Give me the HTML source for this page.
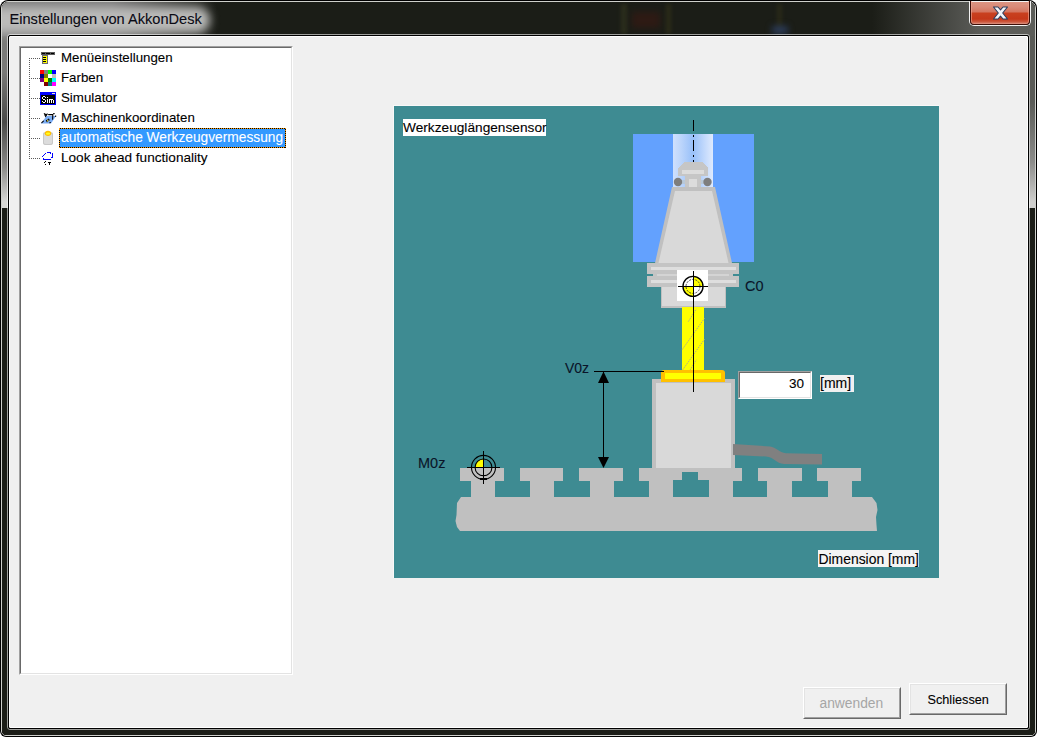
<!DOCTYPE html>
<html><head><meta charset="utf-8"><style>
html,body{margin:0;padding:0;width:1037px;height:737px;overflow:hidden;background:#fff;}
*{box-sizing:border-box;}
body{font-family:"Liberation Sans",sans-serif;position:relative;}
.a{position:absolute;}
.t{position:absolute;white-space:nowrap;line-height:16px;color:#000;-webkit-text-stroke:0.1px currentColor;}
</style></head><body>
<!-- window frame -->
<div class="a" style="left:0;top:0;width:1037px;height:737px;background:#000;border-radius:8px 8px 6px 6px;"></div>
<div class="a" style="left:1px;top:1px;width:1035px;height:735px;border:1px solid #cfd0cc;border-radius:7px 7px 5px 5px;background:#000;"></div>
<!-- dark frame fill -->
<div class="a" style="left:2px;top:2px;width:1033px;height:733px;border-radius:6px 6px 4px 4px;background:#1b1d17;overflow:hidden;">
  <!-- left side gradient -->
  <div class="a" style="left:0;top:0;width:8px;height:206px;background:linear-gradient(#7e7e7c 0px,#7a7a78 70px,#4a4a48 120px,#8a8a88 165px,#d8d8d6 200px,#d8d8d6 206px);"></div>
  <!-- right side gradient -->
  <div class="a" style="left:1025px;top:0;width:8px;height:206px;background:linear-gradient(#5a5b57 0px,#5a5b57 100px,#8c8c8a 160px,#cfcfcd 200px,#cfcfcd 206px);"></div>
  <!-- title bar right gray -->
  <div class="a" style="left:870px;top:0;width:163px;height:34px;background:linear-gradient(90deg,rgba(90,91,87,0) 0px,rgba(90,91,87,0.85) 90px,rgba(92,93,89,1) 110px);"></div>
  <!-- title glow -->
  <div class="a" style="left:0;top:0;width:240px;height:34px;background:linear-gradient(90deg,#828282 0px,#7c7c7c 110px,rgba(27,29,23,0) 215px);"></div>
  <div class="a" style="left:-22px;top:5px;width:230px;height:26px;background:#bbbbb9;filter:blur(5px);border-radius:14px;"></div>
  <!-- specks -->
  <div class="a" style="left:619px;top:2px;width:6px;height:30px;background:#2c2e1c;filter:blur(2px);"></div>
  <div class="a" style="left:630px;top:10px;width:28px;height:16px;background:#2e1a14;filter:blur(3px);"></div>
  <div class="a" style="left:664px;top:2px;width:5px;height:30px;background:#2c2c18;filter:blur(2px);"></div>
  <div class="a" style="left:775px;top:2px;width:5px;height:30px;background:#2a2a18;filter:blur(2px);"></div>
  <div class="a" style="left:770px;top:24px;width:16px;height:8px;background:#2a3a58;filter:blur(3px);"></div>
</div>
<!-- inner borders -->
<div class="a" style="left:7px;top:34px;width:1023px;height:696px;border:1px solid rgba(255,255,255,0.58);border-radius:3px;"></div>
<div class="a" style="left:8px;top:35px;width:1021px;height:694px;border:1px solid #000;border-radius:2px;background:#000;"></div>
<div class="a" style="left:9px;top:36px;width:1019px;height:692px;border:1px solid #fff;background:#f0f0f0;border-radius:1px;"></div>

<!-- title -->
<div class="t" id="title" style="left:9.5px;top:9.5px;font-size:14.6px;line-height:18px;color:#0a0a14;">Einstellungen von AkkonDesk</div>

<!-- close button -->
<div class="a" style="left:969px;top:1px;width:62px;height:25px;border:1px solid #f2f2f2;border-top:none;border-radius:0 0 5px 5px;">
  <div style="width:100%;height:100%;border:1px solid #3c0e08;border-top:none;border-radius:0 0 4px 4px;background:linear-gradient(#f4f4f4 0px,#f4f4f4 1px,#dc9482 1px,#d98a78 6px,#d4745e 11px,#c9401f 12px,#c5381a 18px,#cc5a40 21px,#dd9686 23px);box-shadow:inset 1px 0 0 rgba(240,170,150,0.6),inset -1px 0 0 rgba(240,170,150,0.6);"></div>
</div>
<svg class="a" style="left:985px;top:0px;" width="30" height="28" viewBox="985 0 30 28">
  <path d="M993.5 7 L998 7 L1000.5 9.8 L1003 7 L1007.5 7 L1002.7 13 L1007.5 19 L1003 19 L1000.5 16.2 L998 19 L993.5 19 L998.3 13 Z" fill="#f2f4f8" stroke="#2c3c5c" stroke-width="1.1" stroke-linejoin="round"/>
</svg>

<!-- tree box -->
<div class="a" style="left:19px;top:46px;width:274px;height:629px;border-top:1px solid #a0a0a0;border-left:1px solid #a0a0a0;border-right:1px solid #fff;border-bottom:1px solid #fff;">
  <div style="width:100%;height:100%;border-top:1px solid #696969;border-left:1px solid #696969;border-right:1px solid #e3e3e3;border-bottom:1px solid #e3e3e3;background:#fff;"></div>
</div>


<!-- tree content -->
<svg class="a" style="left:0;top:0;" width="300" height="180" shape-rendering="crispEdges">
  <g fill="#5a5a5a">
    <!-- vertical dotted -->
    <rect x="29" y="58" width="1" height="1"/><rect x="29" y="60" width="1" height="1"/><rect x="29" y="62" width="1" height="1"/><rect x="29" y="64" width="1" height="1"/><rect x="29" y="66" width="1" height="1"/><rect x="29" y="68" width="1" height="1"/><rect x="29" y="70" width="1" height="1"/><rect x="29" y="72" width="1" height="1"/><rect x="29" y="74" width="1" height="1"/><rect x="29" y="76" width="1" height="1"/><rect x="29" y="78" width="1" height="1"/><rect x="29" y="80" width="1" height="1"/><rect x="29" y="82" width="1" height="1"/><rect x="29" y="84" width="1" height="1"/><rect x="29" y="86" width="1" height="1"/><rect x="29" y="88" width="1" height="1"/><rect x="29" y="90" width="1" height="1"/><rect x="29" y="92" width="1" height="1"/><rect x="29" y="94" width="1" height="1"/><rect x="29" y="96" width="1" height="1"/><rect x="29" y="98" width="1" height="1"/><rect x="29" y="100" width="1" height="1"/><rect x="29" y="102" width="1" height="1"/><rect x="29" y="104" width="1" height="1"/><rect x="29" y="106" width="1" height="1"/><rect x="29" y="108" width="1" height="1"/><rect x="29" y="110" width="1" height="1"/><rect x="29" y="112" width="1" height="1"/><rect x="29" y="114" width="1" height="1"/><rect x="29" y="116" width="1" height="1"/><rect x="29" y="118" width="1" height="1"/><rect x="29" y="120" width="1" height="1"/><rect x="29" y="122" width="1" height="1"/><rect x="29" y="124" width="1" height="1"/><rect x="29" y="126" width="1" height="1"/><rect x="29" y="128" width="1" height="1"/><rect x="29" y="130" width="1" height="1"/><rect x="29" y="132" width="1" height="1"/><rect x="29" y="134" width="1" height="1"/><rect x="29" y="136" width="1" height="1"/><rect x="29" y="138" width="1" height="1"/><rect x="29" y="140" width="1" height="1"/><rect x="29" y="142" width="1" height="1"/><rect x="29" y="144" width="1" height="1"/><rect x="29" y="146" width="1" height="1"/><rect x="29" y="148" width="1" height="1"/><rect x="29" y="150" width="1" height="1"/><rect x="29" y="152" width="1" height="1"/><rect x="29" y="154" width="1" height="1"/><rect x="29" y="156" width="1" height="1"/><rect x="29" y="158" width="1" height="1"/>
    <rect x="31" y="58" width="1" height="1"/><rect x="33" y="58" width="1" height="1"/><rect x="35" y="58" width="1" height="1"/><rect x="37" y="58" width="1" height="1"/><rect x="39" y="58" width="1" height="1"/><rect x="31" y="78" width="1" height="1"/><rect x="33" y="78" width="1" height="1"/><rect x="35" y="78" width="1" height="1"/><rect x="37" y="78" width="1" height="1"/><rect x="39" y="78" width="1" height="1"/><rect x="31" y="98" width="1" height="1"/><rect x="33" y="98" width="1" height="1"/><rect x="35" y="98" width="1" height="1"/><rect x="37" y="98" width="1" height="1"/><rect x="39" y="98" width="1" height="1"/><rect x="31" y="118" width="1" height="1"/><rect x="33" y="118" width="1" height="1"/><rect x="35" y="118" width="1" height="1"/><rect x="37" y="118" width="1" height="1"/><rect x="39" y="118" width="1" height="1"/><rect x="31" y="138" width="1" height="1"/><rect x="33" y="138" width="1" height="1"/><rect x="35" y="138" width="1" height="1"/><rect x="37" y="138" width="1" height="1"/><rect x="39" y="138" width="1" height="1"/><rect x="31" y="158" width="1" height="1"/><rect x="33" y="158" width="1" height="1"/><rect x="35" y="158" width="1" height="1"/><rect x="37" y="158" width="1" height="1"/><rect x="39" y="158" width="1" height="1"/>
  </g>
  <!-- menu icon -->
  <rect x="41" y="52" width="14" height="3" fill="#5a5a5a"/>
  <rect x="42" y="53" width="3" height="1" fill="#000"/>
  <rect x="46" y="53" width="4" height="1" fill="#000"/>
  <rect x="51" y="53" width="3" height="1" fill="#000"/>
  <rect x="42" y="55" width="6" height="9" fill="#6a6a78"/>
  <rect x="43" y="56" width="4" height="7" fill="#ffff00"/>
  <rect x="43" y="57" width="3" height="1" fill="#000"/>
  <rect x="43" y="59" width="3" height="1" fill="#000"/>
  <rect x="43" y="61" width="3" height="1" fill="#000"/>
  <!-- farben icon -->
  <rect x="40" y="70" width="4" height="4" fill="#ff0000"/><rect x="44" y="70" width="4" height="4" fill="#808080"/><rect x="48" y="70" width="4" height="4" fill="#00ff00"/><rect x="52" y="70" width="4" height="4" fill="#0000ff"/>
  <rect x="40" y="74" width="4" height="4" fill="#000080"/><rect x="44" y="74" width="4" height="4" fill="#808000"/><rect x="48" y="74" width="4" height="4" fill="#ffffff"/><rect x="52" y="74" width="4" height="4" fill="#c0c0c0"/>
  <rect x="40" y="78" width="4" height="4" fill="#800080"/><rect x="44" y="78" width="4" height="4" fill="#ffff00"/><rect x="48" y="78" width="4" height="4" fill="#008000"/><rect x="52" y="78" width="4" height="4" fill="#00ffff"/>
  <rect x="44" y="82" width="4" height="4" fill="#800000"/><rect x="48" y="82" width="4" height="4" fill="#008080"/><rect x="52" y="82" width="4" height="4" fill="#ff00ff"/>
  <!-- sim icon -->
  <rect x="40" y="92" width="16" height="13" fill="#0000ff"/>
  <rect x="41" y="95" width="14" height="9" fill="#000"/>
  <rect x="52" y="93" width="3" height="1" fill="#e8e8d0"/>
  <g fill="#fff">
    <rect x="43" y="96" width="2" height="1"/><rect x="42" y="97" width="1" height="2"/><rect x="45" y="97" width="1" height="1"/>
    <rect x="43" y="99" width="2" height="1"/><rect x="45" y="100" width="1" height="2"/><rect x="42" y="101" width="1" height="1"/>
    <rect x="43" y="102" width="2" height="1"/>
    <rect x="47" y="97" width="1" height="1"/><rect x="47" y="99" width="1" height="4"/>
    <rect x="49" y="99" width="4" height="1"/><rect x="49" y="100" width="1" height="3"/><rect x="51" y="100" width="1" height="3"/><rect x="53" y="100" width="1" height="3"/>
  </g>
  <!-- maschinen icon -->
  <g shape-rendering="auto">
  <polygon points="41,123.5 51,123.5 56,116 46.5,116" fill="#7aacf4"/>
  <g stroke="#000" stroke-width="1.1" fill="none" stroke-linecap="round">
    <path d="M41.8 122.6 L43.4 121.2"/>
    <path d="M44.3 113.6 L45.2 114.4 L46.2 114.2 M44.8 114.8 L45.6 116.4 L46.6 115 L47.3 114"/>
    <path d="M48.6 114.6 L52.8 114.6 L52.6 119.2"/>
    <path d="M53.6 113.6 L54.2 113.6"/>
    <path d="M46.4 120.6 L48.6 119.2 L49.2 120 M47 121.6 L48 120.6"/>
    <path d="M49.8 122.8 L50.4 122.6"/>
    <path d="M55.4 116.3 L55.8 116"/>
  </g>
  <rect x="47.2" y="119.6" width="1" height="2" fill="#f0e040"/>
  </g>
  <!-- cylinder icon -->
  <g shape-rendering="auto">
    <rect x="43" y="132" width="10" height="13" rx="3" ry="2" fill="#c8c8c8"/>
    <rect x="44" y="133" width="8" height="11" rx="2" ry="1.5" fill="#dcdcdc"/>
    <ellipse cx="48" cy="133.3" rx="3.2" ry="2.6" fill="#ffbf00"/>
    <ellipse cx="48" cy="133.6" rx="2.2" ry="1.2" fill="#ffff20"/>
  </g>
  <!-- look ahead icon -->
  <g fill="#0000ff">
    <rect x="42" y="156" width="1" height="1"/><rect x="43" y="155" width="1" height="1"/><rect x="44" y="154" width="1" height="1"/><rect x="45" y="153" width="1" height="1"/>
    <rect x="47" y="152" width="4" height="1"/><rect x="50" y="153" width="1" height="1"/>
    <rect x="52" y="153" width="1" height="5"/><rect x="51" y="157" width="1" height="1"/>
    <rect x="43" y="158" width="1" height="1"/><rect x="43" y="159" width="8" height="1"/>
  </g>
  <g fill="#000">
    <rect x="45" y="161" width="1" height="1"/><rect x="44" y="162" width="1" height="1"/><rect x="45" y="164" width="1" height="1"/>
    <rect x="48" y="162" width="3" height="1"/><rect x="49" y="163" width="1" height="2"/>
  </g>
</svg>
<div class="a" style="left:59px;top:128px;width:227px;height:20px;background:#3399ff;border:1px solid #ff9a00;"></div>
<svg class="a" style="left:59px;top:128px;" width="227" height="20" shape-rendering="crispEdges"><rect x="0.5" y="0.5" width="226" height="19" fill="none" stroke="#000" stroke-width="1" stroke-dasharray="1 1"/></svg>
<div class="t" style="left:61px;top:50px;font-size:13.3px;">Menüeinstellungen</div>
<div class="t" style="left:61px;top:70px;font-size:13.3px;">Farben</div>
<div class="t" style="left:61px;top:90px;font-size:13.3px;">Simulator</div>
<div class="t" style="left:61px;top:110px;font-size:13.3px;">Maschinenkoordinaten</div>
<div class="t" style="left:61px;top:130px;font-size:13.75px;color:#fff;">automatische Werkzeugvermessung</div>
<div class="t" style="left:61px;top:150px;font-size:13.6px;">Look ahead functionality</div>

<!-- buttons -->
<div class="a" style="left:803px;top:687px;width:98px;height:32px;border-top:1px solid #fff;border-left:1px solid #fff;border-right:1px solid #696969;border-bottom:1px solid #696969;">
  <div style="width:100%;height:100%;border-top:1px solid #e3e3e3;border-left:1px solid #e3e3e3;border-right:1px solid #a0a0a0;border-bottom:1px solid #a0a0a0;background:#f0f0f0;"></div>
</div>
<div class="t" style="left:819.5px;top:695.5px;font-size:13.8px;color:#a6a6a6;-webkit-text-stroke:0;">anwenden</div>
<div class="a" style="left:909px;top:683px;width:98px;height:32px;border-top:1px solid #fff;border-left:1px solid #fff;border-right:1px solid #696969;border-bottom:1px solid #696969;">
  <div style="width:100%;height:100%;border-top:1px solid #e3e3e3;border-left:1px solid #e3e3e3;border-right:1px solid #a0a0a0;border-bottom:1px solid #a0a0a0;background:#f0f0f0;"></div>
</div>
<div class="t" style="left:927.5px;top:691.5px;font-size:12.7px;color:#000;">Schliessen</div>

<!-- teal panel -->
<div class="a" style="left:393px;top:105px;width:546px;height:473px;border-left:1px solid #f8f8f8;border-top:1px solid #f8f8f8;background:#3e8b92;"></div>


<!-- diagram -->
<svg class="a" style="left:394px;top:106px;" width="545" height="472" viewBox="394 106 545 472">
  <!-- spindle blue -->
  <rect x="633" y="134" width="121" height="128" fill="#63a1fe"/>
  <defs>
    <linearGradient id="col" x1="0" x2="1" y1="0" y2="0">
      <stop offset="0" stop-color="#cfe0fd"/>
      <stop offset="0.2" stop-color="#bcd5fb"/>
      <stop offset="0.5" stop-color="#98c0f9"/>
      <stop offset="0.8" stop-color="#c4dafc"/>
      <stop offset="1" stop-color="#dfeafd"/>
    </linearGradient>
  </defs>
  <rect x="673" y="134" width="40" height="128" fill="url(#col)"/>
  <!-- dash-dot center line top -->
  <g fill="#000" shape-rendering="crispEdges">
    <rect x="693" y="120" width="1" height="11"/><rect x="693" y="135" width="1" height="2"/>
    <rect x="693" y="140" width="1" height="11"/><rect x="693" y="155" width="1" height="2"/>
    <rect x="693" y="160" width="1" height="3"/>
  </g>
  <!-- pull stud -->
  <g shape-rendering="crispEdges">
    <path d="M685 162 H702 L708 168 V176 H678 V168 Z" fill="#c6c6c6"/>
    <rect x="682" y="170" width="22" height="4" fill="#dcdcdc"/>
    <rect x="685" y="176" width="16" height="12" fill="#c6c6c6"/>
    <rect x="689" y="179" width="8" height="9" fill="#dcdcdc"/>
    <rect x="681" y="180" width="4" height="4" fill="#b8c8d8"/>
    <rect x="701" y="180" width="4" height="4" fill="#b8c8d8"/>
  </g>
  <circle cx="678" cy="182" r="4.2" fill="#7e7e7e"/>
  <circle cx="707.5" cy="182" r="4.2" fill="#7e7e7e"/>
  <!-- cone -->
  <path d="M672 187 H715 L732 263 H655 Z" fill="#c0c0c0"/>
  <path d="M675 191 H712 L728.5 263 H658.5 Z" fill="#d9d9d9"/>
  <!-- flange -->
  <g shape-rendering="crispEdges">
    <rect x="647" y="263" width="92" height="24" fill="#c4c4c4"/>
    <rect x="647" y="274" width="6" height="2" fill="#3e8b92"/>
    <rect x="733" y="274" width="6" height="2" fill="#3e8b92"/>
    <rect x="651" y="267" width="85" height="3" fill="#dedede"/>
    <rect x="651" y="280" width="85" height="3" fill="#dedede"/>
    <rect x="657" y="274" width="72" height="2" fill="#d4d4d4"/>
    <!-- body -->
    <rect x="661" y="287" width="65" height="21" fill="#c0c0c0"/>
    <rect x="662" y="287" width="63" height="19" fill="#d9d9d9"/>
    <!-- white square -->
    <rect x="677" y="270" width="31" height="31" fill="#fff"/>
  </g>
  <!-- C0 target -->
  <path d="M693 286.4 L693 276.2 A10.2 10.2 0 0 1 703.2 286.4 Z" fill="#ffff00"/>
  <path d="M693 286.4 L693 296.6 A10.2 10.2 0 0 1 682.8 286.4 Z" fill="#ffff00"/>
  <circle cx="693" cy="286.4" r="10" fill="none" stroke="#000" stroke-width="1.4"/>
  <circle cx="693" cy="286.4" r="7" fill="none" stroke="#333" stroke-width="0.9" stroke-dasharray="2 1.2"/>
  <g fill="#000" shape-rendering="crispEdges">
    <rect x="678" y="286" width="30" height="1"/>
    <rect x="693" y="271" width="1" height="121"/>
  </g>
  <!-- shaft -->
  <rect x="682" y="307" width="22" height="64" fill="#ffff00" shape-rendering="crispEdges"/>
  <g stroke="#a8a890" stroke-width="1" fill="none" stroke-dasharray="1.5 1">
    <path d="M688.3 321.6 L696.4 308.8"/>
    <path d="M682.2 349.6 L704.5 318.3"/>
    <path d="M682.2 370.5 L704.5 339.2"/>
    <path d="M689.8 370.5 L696.4 359.6"/>
  </g>
  <rect x="693" y="307" width="1" height="85" fill="#000" shape-rendering="crispEdges"/>
  <!-- sensor body -->
  <g shape-rendering="crispEdges">
    <rect x="652" y="379" width="83" height="89" fill="#c0c0c0"/>
    <rect x="656" y="383" width="75" height="85" fill="#d9d9d9"/>
  </g>
  <!-- sensor plate -->
  <path d="M664 370 H722 Q725 370 725 373 V382 H661 V373 Q661 370 664 370 Z" fill="#ffc000"/>
  <rect x="665" y="373" width="56" height="6" fill="#ffff00" shape-rendering="crispEdges"/>
  <rect x="693" y="370" width="1" height="22" fill="#000" shape-rendering="crispEdges"/>
  <!-- cable -->
  <path d="M733 444 L770 446.5 C776 447 779 452.5 786 453.2 L822 454 V464.5 L784 464 C776 463.5 774 457 766 456.5 L733 455 Z" fill="#808080"/>
  <!-- rail -->
  <g fill="#c0c0c0" shape-rendering="crispEdges">
    <rect x="460" y="468" width="44" height="13"/><rect x="471" y="480" width="24" height="18"/><rect x="520" y="468" width="43" height="13"/><rect x="530" y="480" width="24" height="18"/><rect x="579" y="468" width="44" height="13"/><rect x="590" y="480" width="24" height="18"/><rect x="758" y="468" width="44" height="13"/><rect x="767" y="480" width="25" height="18"/><rect x="817" y="468" width="44" height="13"/><rect x="828" y="480" width="24" height="18"/><path d="M639 468 H742 V481 H733 V498 H709 V480 H698 V472 H682 V480 H673 V498 H649 V481 H639 Z"/>
  </g>
  <path d="M461 497 H872 L876.5 503 L877.5 510 L876 517 L876.5 525 L877 531 H460 L457 527 L455.5 521 L456.5 515 L457 503 Z" fill="#c0c0c0"/>
  <!-- V0z dimension -->
  <g fill="#000" shape-rendering="crispEdges">
    <rect x="594" y="371" width="70" height="1"/>
    <rect x="603" y="372" width="1" height="95"/>
  </g>
  <path d="M603.5 371.5 L609 383 H598 Z" fill="#000"/>
  <path d="M603.5 468 L609 457 H598 Z" fill="#000"/>
  <!-- M0z target -->
  <path d="M483.5 467.4 L483.5 459 A8.4 8.4 0 0 0 475.1 467.4 Z" fill="#ffff00"/>
  <circle cx="483.5" cy="467.4" r="12" fill="none" stroke="#000" stroke-width="1.1"/>
  <circle cx="483.5" cy="467.4" r="8.4" fill="none" stroke="#000" stroke-width="1.1"/>
  <g fill="#000" shape-rendering="crispEdges">
    <rect x="467" y="467" width="33" height="1"/>
    <rect x="483" y="451" width="1" height="33"/>
    <rect x="481" y="475" width="5" height="1"/>
    <rect x="480" y="478" width="7" height="2"/>
  </g>
</svg>
<!-- diagram labels -->
<div class="a" style="left:403px;top:119px;width:143px;height:17px;background:#fff;"></div>
<div class="t" style="left:403px;top:119px;font-size:13.7px;line-height:17px;">Werkzeuglängensensor</div>
<div class="a" style="left:818px;top:550px;width:101px;height:17px;background:#f4f4f4;"></div>
<div class="t" style="left:818.5px;top:550.5px;font-size:13.9px;line-height:17px;">Dimension [mm]</div>
<div class="t" style="left:745px;top:278px;font-size:14.5px;color:#0a1428;">C0</div>
<div class="t" style="left:565px;top:360px;font-size:14px;color:#0a1428;">V0z</div>
<div class="t" style="left:418px;top:455px;font-size:14.5px;color:#0a1428;">M0z</div>
<!-- input -->
<div class="a" style="left:738px;top:371px;width:74px;height:28px;border-top:1px solid #a0a0a0;border-left:1px solid #a0a0a0;border-right:1px solid #fff;border-bottom:1px solid #fff;">
  <div style="width:100%;height:100%;border-top:1px solid #696969;border-left:1px solid #696969;border-right:1px solid #e3e3e3;border-bottom:1px solid #e3e3e3;background:#fff;"></div>
</div>
<div class="t" style="left:789px;top:376px;font-size:13.5px;">30</div>
<div class="a" style="left:820px;top:375px;width:34px;height:17px;background:#f0f0f0;"></div>
<div class="t" style="left:820px;top:375px;font-size:14px;line-height:17px;">[mm]</div>

</body></html>
